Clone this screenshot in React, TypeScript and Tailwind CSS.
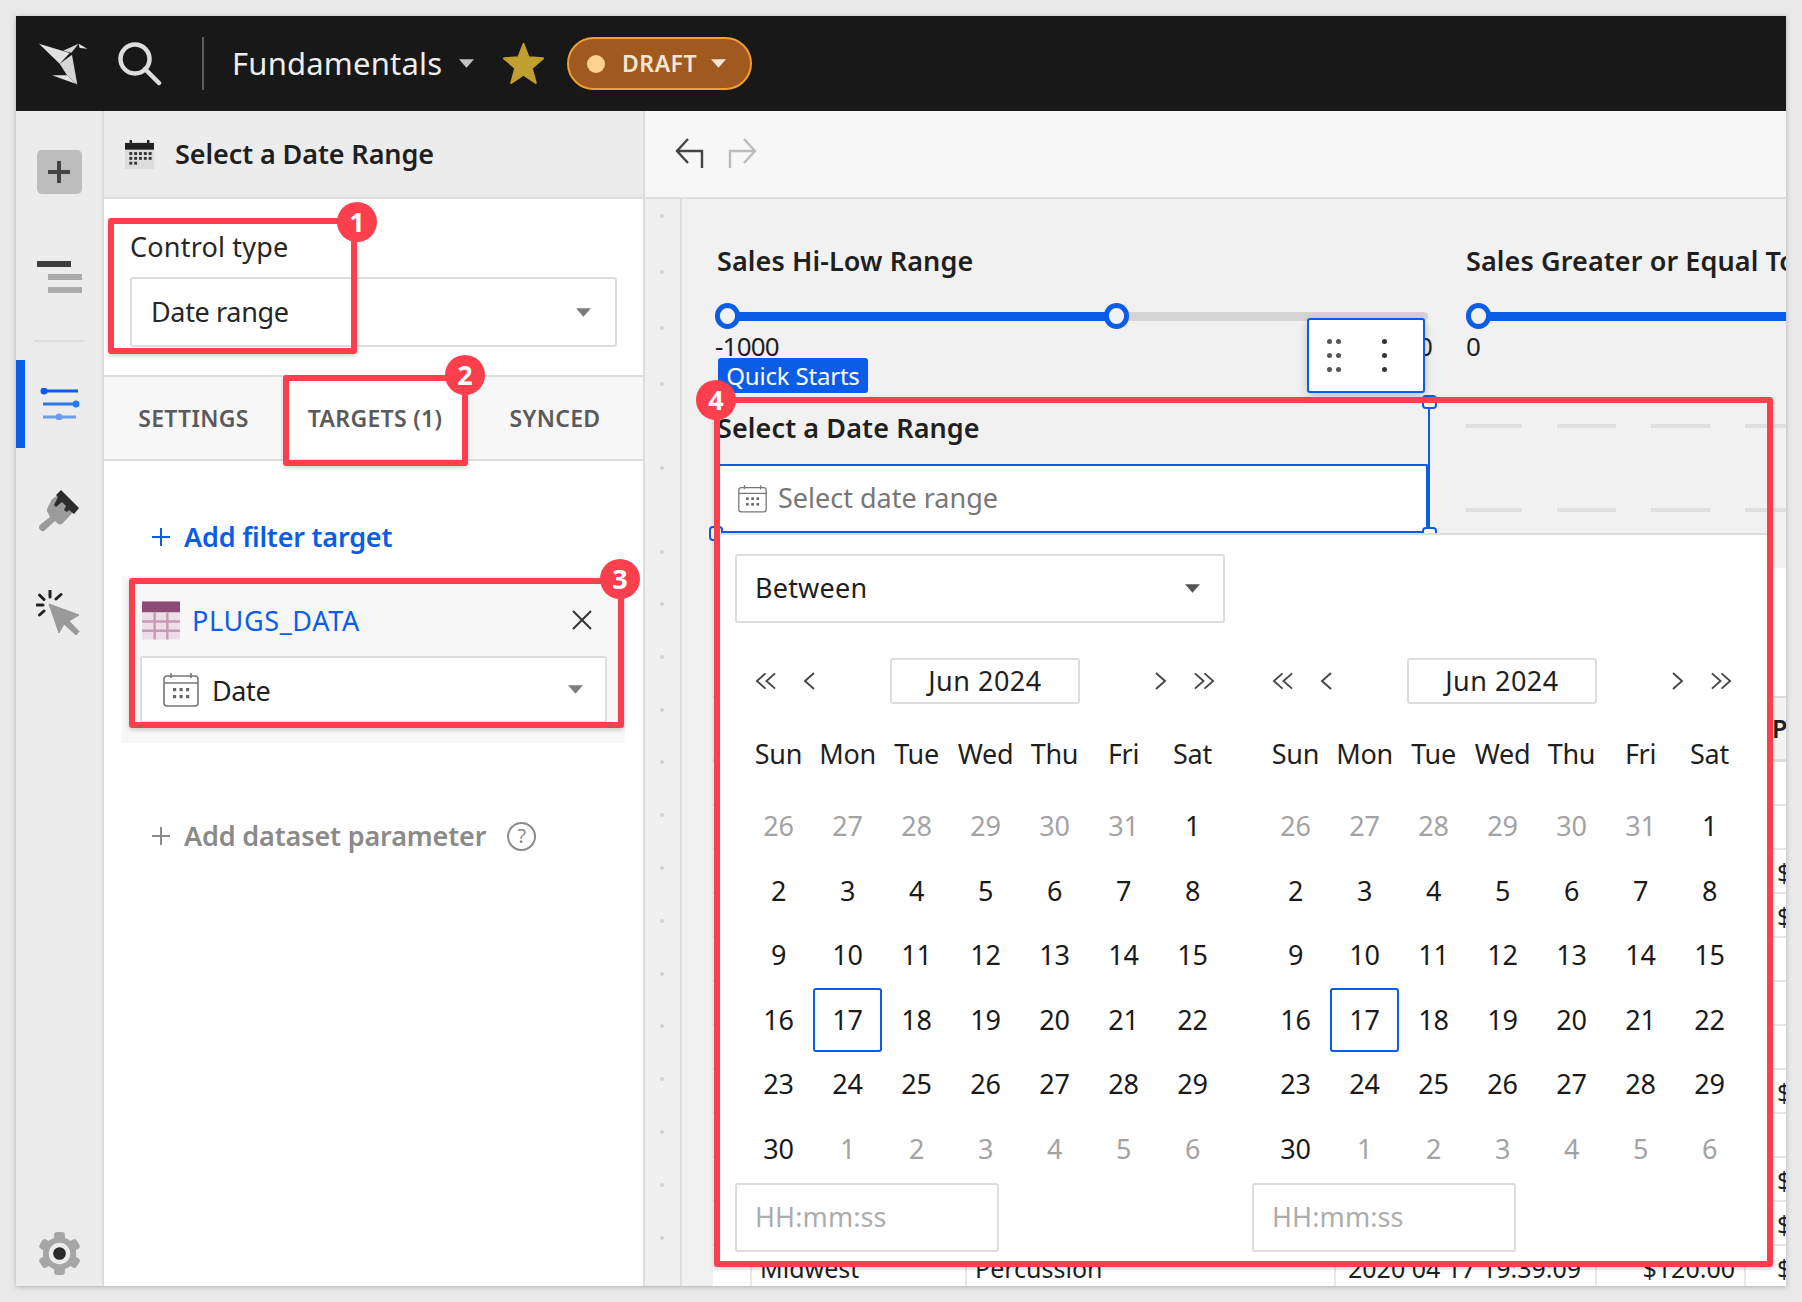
import type { ReactNode } from "react";

const weekdays = ["Sun", "Mon", "Tue", "Wed", "Thu", "Fri", "Sat"];

const juneCells = [
  [26, true], [27, true], [28, true], [29, true], [30, true], [31, true], [1, false],
  [2, false], [3, false], [4, false], [5, false], [6, false], [7, false], [8, false],
  [9, false], [10, false], [11, false], [12, false], [13, false], [14, false], [15, false],
  [16, false], [17, false], [18, false], [19, false], [20, false], [21, false], [22, false],
  [23, false], [24, false], [25, false], [26, false], [27, false], [28, false], [29, false],
  [30, false], [1, true], [2, true], [3, true], [4, true], [5, true], [6, true],
] as [number, boolean][];

const tableRows = ["", "", "$34.00", "$18.50", "", "", "", "$42.00", "", "$27.50", "$64.00", "$120.00"];

function Caret({ className = "" }: { className?: string }) {
  return (
    <svg viewBox="0 0 16 9" className={`w-[15px] h-[9px] ${className}`}>
      <path d="M0 0H16L8 9Z" fill="currentColor" />
    </svg>
  );
}

function CalendarOutline({ className = "" }: { className?: string }) {
  return (
    <svg viewBox="0 0 36 34" className={className} fill="none" stroke="#777" strokeWidth="1.6">
      <rect x="1" y="3" width="34" height="30" rx="3" />
      <path d="M1 10H35M8 0V5M28 0V5" />
      <g fill="#666" stroke="none">
        <rect x="10" y="15" width="3.2" height="3.2" />
        <rect x="16.5" y="15" width="3.2" height="3.2" />
        <rect x="23" y="15" width="3.2" height="3.2" />
        <rect x="10" y="22" width="3.2" height="3.2" />
        <rect x="16.5" y="22" width="3.2" height="3.2" />
        <rect x="23" y="22" width="3.2" height="3.2" />
      </g>
    </svg>
  );
}

function Plus({ className = "" }: { className?: string }) {
  return (
    <svg viewBox="0 0 20 20" className={`w-5 h-5 ${className}`} fill="none" stroke="currentColor" strokeWidth="2">
      <path d="M10 1V19M1 10H19" />
    </svg>
  );
}

function Chevron({ dir, double = false }: { dir: "left" | "right"; double?: boolean }) {
  const flip = dir === "right" ? "scale-x-[-1]" : "";
  return (
    <svg viewBox={double ? "0 0 24 18" : "0 0 13 18"} className={`${double ? "w-[23px]" : "w-[13px]"} h-[18px] ${flip}`} fill="none" stroke="#444" strokeWidth="1.9">
      <path d="M12 1L3 9L12 17" />
      {double && <path d="M22 1L13 9L22 17" />}
    </svg>
  );
}

function RailItem({ children, className = "" }: { children: ReactNode; className?: string }) {
  return <div className={`flex justify-center ${className}`}>{children}</div>;
}

function Rail() {
  const teeth = [0, 60, 120, 180, 240, 300];
  return (
    <aside className="relative w-[88px] shrink-0 flex flex-col bg-[#ececec] border-r-2 border-[#dddddd]">
      <RailItem className="pt-[39px]">
        <div className="w-[45px] h-[44px] rounded-[5px] bg-[#bdbdbd] flex items-center justify-center text-[#444444]">
          <svg viewBox="0 0 24 24" className="w-[24px] h-[24px]" fill="none" stroke="currentColor" strokeWidth="4">
            <path d="M12 1V23M1 12H23" />
          </svg>
        </div>
      </RailItem>
      <RailItem className="pt-[67px]">
        <div className="w-[45px] flex flex-col gap-[7px] items-start">
          <div className="w-[34px] h-[6px] bg-[#3d3d3d]" />
          <div className="w-[34px] h-[6px] bg-[#ababab] ml-[11px]" />
          <div className="w-[34px] h-[6px] bg-[#ababab] ml-[11px]" />
        </div>
      </RailItem>
      <div className="mt-[47px] ml-[18px] w-[50px] h-[2px] bg-[#dcdcdc]" />
      <div className="mt-[18px] h-[88px] flex items-center relative">
        <div className="w-[9px] h-full bg-[#0b5ce6]" />
        <svg viewBox="0 0 40 32" className="w-[40px] h-[32px] ml-[15px]" fill="none" strokeWidth="3">
          <path d="M4 3H38" stroke="#0b5ce6" />
          <circle cx="4" cy="3" r="3.5" fill="#0b5ce6" />
          <path d="M3 16H36" stroke="#2e77ea" />
          <circle cx="36" cy="16" r="3.5" fill="#2e77ea" />
          <path d="M3 29H36" stroke="#6a9df0" />
          <circle cx="19" cy="29" r="3.5" fill="#6a9df0" />
        </svg>
      </div>
      <RailItem className="pt-[42px]">
        <svg viewBox="0 0 42 42" className="w-[42px] h-[42px]">
          <path d="M14 9L22 4L37 20L25 33C23 35 21 35 19 33L17 31L6 41C4 42 1 40 1 37C1 36 2 35 3 34L12 27L10 23C8 21 9 19 10 17Z" fill="#9b9b9b" />
          <path d="M23 0L41 18L36 24L31 20L29 22L26 20L28 16L24 12L18 17L16 15L20 7L18 5Z" fill="#2c2c2c" />
        </svg>
      </RailItem>
      <RailItem className="pt-[58px]">
        <svg viewBox="0 0 46 46" className="w-[46px] h-[46px]">
          <path d="M13 14L43 25L33 31L43 41.5L40 45L28 34L23 43Z" fill="#9a9a9a" stroke="#9a9a9a" strokeLinejoin="round" />
          <path d="M14 1V7M20 9L25 4.5M1 15H7M3.5 25L8 21M3.5 5L8 9.5" stroke="#222" strokeWidth="3" strokeLinecap="round" />
        </svg>
      </RailItem>
      <div className="mt-auto mb-[10px] flex justify-center">
        <svg viewBox="0 0 44 46" className="w-[43px] h-[45px]">
          {teeth.map((deg) => (
            <rect key={deg} x="16.5" y="1" width="11" height="10" rx="3" fill="#a6a6a6" transform={`rotate(${deg} 22 23)`} />
          ))}
          <circle cx="22" cy="23" r="17" fill="#a6a6a6" />
          <circle cx="22" cy="23" r="11" fill="#ececec" />
          <circle cx="22" cy="23" r="6.5" fill="#2a2a2a" />
        </svg>
      </div>
    </aside>
  );
}

function Panel() {
  return (
    <section className="w-[541px] shrink-0 flex flex-col bg-white border-r-2 border-[#dddddd]">
      <div className="h-[88px] shrink-0 bg-[#ececec] border-b-2 border-[#dddddd] flex items-center pl-[21px]">
        <svg viewBox="0 0 30 30" className="w-[29px] h-[29px]">
          <rect x="0" y="3" width="30" height="27" fill="#dcdcdc" />
          <rect x="0" y="3" width="30" height="7" fill="#222" />
          <path d="M6 0V4M24 0V4" stroke="#222" strokeWidth="2.5" />
          <g fill="#333">
            {[14, 19, 24].map((y) =>
              [6, 11, 16, 21, 26].map((x) =>
                y === 24 && x > 11 ? null : <rect key={`${x}-${y}`} x={x - 1.5} y={y - 1.5} width="3" height="3" />,
              ),
            )}
          </g>
        </svg>
        <span className="ml-[21px] text-[27px] font-semibold text-[#1f1f1f] tracking-[-0.1px]">Select a Date Range</span>
      </div>

      <div className="h-[176px] shrink-0 px-[26px] pt-[29px]">
        <div className="text-[27px] leading-[38px] text-[#262626] tracking-[0.2px]">Control type</div>
        <div className="mt-[11px] h-[70px] rounded-[3px] border-2 border-[#dddddd] flex items-center justify-between pl-[19px] pr-[24px]">
          <span className="text-[27px] text-[#262626] tracking-[-0.35px]">Date range</span>
          <Caret className="text-[#7d7d7d]" />
        </div>
      </div>

      <div className="h-[86px] shrink-0 grid grid-cols-[179px_184px_1fr] bg-[#f7f7f7] border-y-2 border-[#dddddd] text-[23px] font-semibold text-[#5a5a5a] tracking-[0.3px]">
        <div className="flex items-center justify-center">SETTINGS</div>
        <div className="flex items-center justify-center bg-white">TARGETS (1)</div>
        <div className="flex items-center justify-center">SYNCED</div>
      </div>

      <div className="flex items-center pl-[47px] mt-[57px] h-[38px] text-[#0b5ce6]">
        <Plus />
        <span className="ml-[13px] text-[27px] font-semibold tracking-[-0.2px]">Add filter target</span>
      </div>

      <div className="mt-[20px] mx-[18px] w-[503px] h-[167px] bg-[#f7f7f7] px-[18px] pt-[24px]">
        <div className="flex items-center h-[40px] pl-[2px]">
          <svg viewBox="0 0 39 39" className="w-[38px] h-[39px] shrink-0">
            <rect width="39" height="39" fill="#ecdde8" />
            <rect width="39" height="11" fill="#8f4b78" />
            <path d="M0 20.5H39M0 30H39M13 11V39M26 11V39" stroke="#c49ab6" strokeWidth="2.4" />
          </svg>
          <span className="ml-[12px] mt-[2px] text-[27px] text-[#0b5ce6] tracking-[0.65px]">PLUGS_DATA</span>
          <svg viewBox="0 0 20 20" className="w-[20px] h-[20px] ml-auto mr-[15px]" fill="none" stroke="#333" strokeWidth="2">
            <path d="M1 1L19 19M19 1L1 19" />
          </svg>
        </div>
        <div className="mt-[16px] h-[67px] bg-white border-2 border-[#dddddd] rounded-[3px] flex items-center pl-[21px] pr-[22px]">
          <CalendarOutline className="w-[36px] h-[34px]" />
          <span className="ml-[13px] mt-[3px] text-[27px] text-[#1f1f1f] tracking-[-0.4px]">Date</span>
          <Caret className="ml-auto text-[#7d7d7d]" />
        </div>
      </div>

      <div className="flex items-center pl-[47px] mt-[74px] h-[38px] text-[#8a8a8a]">
        <Plus />
        <span className="ml-[13px] text-[27px] font-semibold tracking-[-0.15px]">Add dataset parameter</span>
        <span className="ml-[21px] w-[29px] h-[29px] rounded-full border-2 border-[#8a8a8a] flex items-center justify-center text-[20px]">?</span>
      </div>
    </section>
  );
}

function Slider({ fill, low, high }: { fill: string; low: string; high?: string }) {
  return (
    <div className="relative h-[9px] rounded-full bg-[#d4d4d4] mt-[32px]">
      <div className={`absolute left-[8px] top-0 h-full bg-[#0b5ce6] ${fill}`} />
      <div className={`absolute top-[-9px] w-[25px] h-[26px] rounded-full bg-[#f1f1f1] border-[5px] border-[#0b5ce6] ${low}`} />
      {high && <div className={`absolute top-[-9px] w-[25px] h-[26px] rounded-full bg-[#f1f1f1] border-[5px] border-[#0b5ce6] ${high}`} />}
    </div>
  );
}

function Dashes({ className = "" }: { className?: string }) {
  return (
    <div className={`flex gap-[35px] ${className}`}>
      {[0, 1, 2, 3].map((i) => (
        <div key={i} className="w-[59px] h-[4px] shrink-0 bg-[#e0e0e0]" />
      ))}
    </div>
  );
}

function Canvas() {
  return (
    <div className="flex-1 min-h-0 flex overflow-hidden">
      <div className="w-[37px] shrink-0 border-r-2 border-[#dddddd] bg-[#f0f0f0] flex flex-col items-center pt-[15px] pr-[2px]">
        <div className="flex flex-col gap-[52px]">
          {[0, 1, 2, 3].map((i) => (
            <div key={i} className="w-[4px] h-[4px] rounded-full bg-[#d2d2d2]" />
          ))}
        </div>
        <div className="flex flex-col gap-[80px] mt-[80px]">
          {[0, 1].map((i) => (
            <div key={i} className="w-[4px] h-[4px] rounded-full bg-[#d2d2d2]" />
          ))}
        </div>
        <div className="flex flex-col gap-[48.8px] mt-[48px]">
          {Array.from({ length: 13 }, (_, i) => (
            <div key={i} className="w-[4px] h-[4px] rounded-full bg-[#d2d2d2]" />
          ))}
        </div>
      </div>

      <div className="flex-1 min-w-0 bg-[#f1f1f1] flex flex-col overflow-hidden">
        <div className="h-[369px] shrink-0 pl-[35px] pt-[43px] grid grid-cols-[711px_1fr] gap-x-[38px] content-start">
          <div className="h-[155px]">
            <div className="text-[27px] leading-[38px] font-semibold text-[#1f1f1f] tracking-[0.1px]">Sales Hi-Low Range</div>
            <Slider fill="w-[396px]" low="left-[-2px]" high="left-[387px]" />
            <div className="mt-[9px] ml-[-2px] text-[26px] leading-[32px] tracking-[-0.8px] text-[#1f1f1f] flex justify-between">
              <span>-1000</span>
              <span className="mr-[-4px]">1000</span>
            </div>
          </div>
          <div className="h-[155px] min-w-0 overflow-hidden">
            <div className="text-[27px] leading-[38px] font-semibold text-[#1f1f1f] tracking-[0.1px] whitespace-nowrap">Sales Greater or Equal To</div>
            <Slider fill="w-full" low="left-0" />
            <div className="mt-[9px] text-[26px] leading-[32px] text-[#1f1f1f]">0</div>
          </div>
          <div>
            <div className="text-[27px] leading-[38px] font-semibold text-[#1f1f1f] tracking-[0.1px] pt-[12px] h-[67px]">Select a Date Range</div>
            <div className="h-[69px] bg-white border-y-2 border-r-2 border-[#0b5ce6] rounded-tr-[2px] flex items-center pl-[21px]">
              <CalendarOutline className="w-[29px] h-[28px]" />
              <span className="ml-[11px] text-[27px] text-[#777777] tracking-[0px]">Select date range</span>
            </div>
          </div>
          <div className="pt-[27px] overflow-hidden">
            <Dashes className="ml-[-3px]" />
            <Dashes className="ml-[-3px] mt-[80px]" />
          </div>
        </div>

        <div className="flex-1 min-h-0 ml-[31px] bg-white overflow-hidden">
          <div className="h-[128px]" />
          <div className="h-[66px] bg-[#f3f3f3] border-t-2 border-b-[3px] border-[#dddddd] text-[25px] font-semibold text-[#1f1f1f] pl-[1059px] flex items-center whitespace-nowrap">
            Price
          </div>
          {tableRows.map((price, i) => (
            <div key={i} className="h-[44px] grid grid-cols-[37px_215px_369px_261px_149px_1fr] border-b-2 border-[#e8e8e8] text-[25px] leading-[44px] tracking-[0px] text-[#1f1f1f] whitespace-nowrap">
              <div />
              <div className="border-l-2 border-[#e8e8e8] pl-[8px]">{i === 11 && "Midwest"}</div>
              <div className="border-l-2 border-[#e8e8e8] pl-[8px]">{i === 11 && "Percussion"}</div>
              <div className="border-l-2 border-[#e8e8e8] pl-[12px]">{i === 11 && "2020 04 17 19:39:09"}</div>
              <div className="border-l-2 border-[#e8e8e8] pr-[9px] text-right">{i === 11 && "$120.00"}</div>
              <div className="border-l-2 border-[#e8e8e8] pl-[31px] overflow-hidden">{price}</div>
            </div>
          ))}
        </div>
      </div>
    </div>
  );
}

function Month() {
  return (
    <div className="w-[517px] shrink-0">
      <div className="h-[46px] flex items-center">
        <div className="ml-[19px]"><Chevron dir="left" double /></div>
        <div className="ml-[25px]"><Chevron dir="left" /></div>
        <div className="ml-[75px] w-[190px] h-[46px] rounded-[3px] border-2 border-[#dddddd] flex items-center justify-center text-[27px] tracking-[0.5px] text-[#1f1f1f]">
          Jun 2024
        </div>
        <div className="ml-[75px]"><Chevron dir="right" /></div>
        <div className="ml-[25px]"><Chevron dir="right" double /></div>
      </div>
      <div className="ml-[9px] grid grid-cols-[repeat(7,69px)] h-[64px] mt-[18px] items-center text-center text-[27px] tracking-[-0.3px] text-[#1f1f1f]">
        {weekdays.map((d) => (
          <div key={d}>{d}</div>
        ))}
      </div>
      <div className="ml-[9px] mt-[8px] grid grid-cols-[repeat(7,69px)] auto-rows-[64.6px] text-[27px] tracking-[-0.3px] text-center">
        {juneCells.map(([day, muted], i) => (
          <div
            key={i}
            className={`flex items-center justify-center rounded-[3px] border-2 ${day === 17 ? "border-[#0b5ce6]" : "border-transparent"} ${muted ? "text-[#a3a3a3]" : "text-[#1a1a1a]"}`}
          >
            {day}
          </div>
        ))}
      </div>
      <div className="mt-[1px] w-[264px] h-[69px] rounded-[3px] border-2 border-[#dddddd] flex items-center pl-[18px] text-[27px] tracking-[0.1px] text-[#adadad]">
        HH:mm:ss
      </div>
    </div>
  );
}

function DatePopover() {
  return (
    <div className="absolute left-[716px] top-[533px] w-[1056px] h-[732px] bg-white border-t-2 border-[#dddddd] pt-[19px] pl-[19px]">
      <div className="w-[490px] h-[69px] rounded-[3px] border-2 border-[#dddddd] flex items-center justify-between pl-[18px] pr-[23px] text-[27px] tracking-[0.2px] text-[#1f1f1f]">
        Between
        <Caret className="text-[#555555]" />
      </div>
      <div className="mt-[35px] flex">
        <Month />
        <Month />
      </div>
    </div>
  );
}

function Callout({ box, badge, n }: { box: string; badge: string; n: number }) {
  return (
    <>
      <div className={`absolute border-[6px] border-[#fb3f4d] rounded-[3px] shadow-[0_2px_4px_rgba(0,0,0,0.18)] ${box}`} />
      <div className={`absolute w-[40px] h-[40px] rounded-full bg-[#fb3f4d] text-white text-[27px] font-bold flex items-center justify-center ${badge}`}>
        {n}
      </div>
    </>
  );
}

export default function App() {
  return (
    <div className="relative w-[1802px] h-[1302px] overflow-hidden bg-[#e9e9e9] p-4 font-['Noto_Sans','Lato',sans-serif]">
      <div className="w-[1770px] h-[1270px] flex flex-col bg-white shadow-[0_1px_5px_rgba(0,0,0,0.25)]">
        <header className="h-[95px] shrink-0 bg-[#181818] flex items-center pl-[22px] text-white">
          <svg viewBox="25 33 150 130" className="w-[50px] h-[44px]">
            <path d="M28 37L120 65L90 97Z" fill="#e2e2e2" />
            <path d="M90 97L127 70L143 160L112 132Z" fill="#d5d5d5" />
            <path d="M67 132H112L140 158Z" fill="#e2e2e2" />
            <path d="M100 58L147 37L125 64Z" fill="#d5d5d5" />
            <path d="M147 37L173 52L150 50Z" fill="#e2e2e2" />
          </svg>
          <svg viewBox="0 0 44 44" className="w-[44px] h-[44px] ml-[30px]" fill="none" stroke="#dddddd" strokeWidth="4.5" strokeLinecap="round">
            <circle cx="17" cy="17" r="14.5" />
            <path d="M27 27L41 41" />
          </svg>
          <div className="ml-[40px] w-[2px] h-[53px] bg-[#5c5c5c]" />
          <span className="ml-[28px] w-[211px] text-[31px] tracking-[0.2px] text-[#eeeeee] whitespace-nowrap">Fundamentals</span>
          <Caret className="ml-[16px] text-[#c4c4c4]" />
          <svg viewBox="0 0 42 42" className="w-[43px] h-[43px] ml-[28px]">
            <path d="M21 2L26 15L40 16L29 25.500L33 40L21 32L9 40L13 25.500L2 16L16 15Z" fill="#bf9f30" stroke="#bf9f30" strokeWidth="2" strokeLinejoin="round" />
          </svg>
          <div className="ml-[22px] w-[185px] h-[53px] rounded-full bg-[#a0591f] border-2 border-[#f0a030] flex items-center pl-[18px]">
            <div className="w-[18px] h-[18px] rounded-full bg-[#fdd28c]" />
            <span className="ml-[17px] text-[23px] font-semibold tracking-[0.5px] text-[#f5e6d4]">DRAFT</span>
            <Caret className="ml-[14px] text-[#f5e6d4]" />
          </div>
        </header>
        <div className="flex-1 min-h-0 flex">
          <Rail />
          <Panel />
          <main className="flex-1 min-w-0 flex flex-col">
            <div className="h-[88px] shrink-0 bg-[#f7f7f7] border-b-2 border-[#dddddd] flex items-center pl-[30px] gap-[24px] pb-[2px]">
              <svg viewBox="0 0 29 30" className="w-[29px] h-[30px]" fill="none" stroke="#444444" strokeWidth="2.4">
                <path d="M13 1L2 13L13 25M2 13H27V30" />
              </svg>
              <svg viewBox="0 0 29 30" className="w-[29px] h-[30px]" fill="none" stroke="#bcbcbc" strokeWidth="2.4">
                <path d="M16 1L27 13L16 25M27 13H2V30" />
              </svg>
            </div>
            <Canvas />
          </main>
        </div>
      </div>

      <div className="absolute left-[1428px] top-[402px] w-[2px] h-[128px] bg-[#0b5ce6]" />
      <div className="absolute left-[1422px] top-[395px] w-[15px] h-[14px] rounded-[4px] bg-white border-2 border-[#0b5ce6]" />
      <div className="absolute left-[1422px] top-[527px] w-[15px] h-[14px] rounded-[4px] bg-white border-2 border-[#0b5ce6]" />
      <div className="absolute left-[709px] top-[526px] w-[14px] h-[15px] rounded-[4px] bg-white border-2 border-[#0b5ce6]" />

      <DatePopover />

      <div className="absolute left-[718px] top-[358px] w-[150px] h-[35px] rounded-[3px] bg-[#0b5ce6] text-white text-[24px] tracking-[-0.2px] leading-[35px] text-center whitespace-nowrap">
        Quick Starts
      </div>
      <div className="absolute left-[1307px] top-[318px] w-[118px] h-[75px] rounded-[3px] bg-white border-2 border-[#0b5ce6] shadow-[0_3px_10px_rgba(0,0,0,0.2)] flex items-center pl-[18px] gap-[41px]">
        <div className="grid grid-cols-2 gap-x-[4px] gap-y-[9px]">
          {[0, 1, 2, 3, 4, 5].map((i) => (
            <div key={i} className="w-[5px] h-[5px] rounded-full bg-[#555555]" />
          ))}
        </div>
        <div className="flex flex-col gap-[9px]">
          {[0, 1, 2].map((i) => (
            <div key={i} className="w-[5px] h-[5px] rounded-full bg-[#333333]" />
          ))}
        </div>
      </div>

      <Callout n={1} box="left-[108px] top-[218px] w-[249px] h-[136px]" badge="left-[337px] top-[202px]" />
      <Callout n={2} box="left-[283px] top-[375px] w-[185px] h-[91px]" badge="left-[445px] top-[355px]" />
      <Callout n={3} box="left-[129px] top-[578px] w-[495px] h-[150px]" badge="left-[600px] top-[559px]" />
      <Callout n={4} box="left-[714px] top-[397px] w-[1059px] h-[870px]" badge="left-[696px] top-[380px]" />
    </div>
  );
}
